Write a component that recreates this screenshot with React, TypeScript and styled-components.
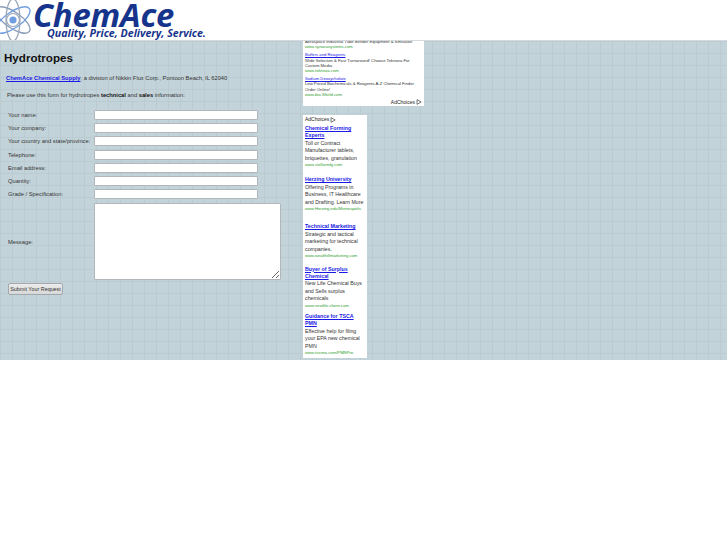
import styled, { createGlobalStyle } from "styled-components";

const fields = [
  "Your name:",
  "Your company:",
  "Your country and state/province:",
  "Telephone:",
  "Email address:",
  "Quantity:",
  "Grade / Specification:",
];

const topAds = [
  {
    title: "Buffers and Reagents",
    lines: ["Wide Selection & Fast Turnaround! Choose Teknova For", "Custom Media"],
    url: "www.teknova.com",
  },
  {
    title: "Sodium Deoxycholate",
    lines: ["Low Priced Biochemicals & Reagents A-Z Chemical Finder.", "Order Online!"],
    url: "www.bio-World.com",
  },
];

const sideAds = [
  {
    title: ["Chemical Forming", "Experts"],
    lines: ["Toll or Contract", "Manufacturer tablets,", "briquettes, granulation"],
    url: "www.stellarmfg.com",
    gap: 9,
  },
  {
    title: ["Herzing University"],
    lines: ["Offering Programs in", "Business, IT Healthcare", "and Drafting. Learn More"],
    url: "www.Herzing.edu/Minneapolis",
    gap: 12,
  },
  {
    title: ["Technical Marketing"],
    lines: ["Strategic and tactical", "marketing for technical", "companies."],
    url: "www.wealthillmarketing.com",
    gap: 7,
  },
  {
    title: ["Buyer of Surplus", "Chemical"],
    lines: ["New Life Chemical Buys", "and Sells surplus", "chemicals"],
    url: "www.newlife-chem.com",
    gap: 5,
  },
  {
    title: ["Guidance for TSCA", "PMN"],
    lines: ["Effective help for filing", "your EPA new chemical", "PMN"],
    url: "www.tsicma.com/PMNPro",
    gap: 0,
  },
];

function AtomLogo() {
  return (
    <svg width="36" height="40" viewBox="0 0 36 40" fill="none">
      <ellipse cx="13" cy="20" rx="20" ry="8" stroke="#8a9bb5" strokeWidth="1.3" transform="rotate(35 13 20)" />
      <ellipse cx="13" cy="20" rx="20" ry="8" stroke="#6f9fe0" strokeWidth="1.3" transform="rotate(-35 13 20)" />
      <ellipse cx="13" cy="20" rx="7" ry="21" stroke="#9aa7b8" strokeWidth="1.3" />
      <circle cx="13" cy="20" r="6.5" stroke="#9aa7b8" strokeWidth="1.2" />
      <circle cx="13" cy="20" r="3.6" fill="#6f9fe0" />
    </svg>
  );
}

function ChoicesMark() {
  return (
    <svg width="6" height="6" viewBox="0 0 6 6" fill="none">
      <path d="M1 .7 5.2 3 1 5.3Z" stroke="#555" strokeWidth=".8" />
    </svg>
  );
}

export default function App() {
  return (
    <>
      <GlobalStyle />
      <Header>
        <AtomLogo />
        <Brand>
          <BrandName>ChemAce</BrandName>
          <Tagline>Quality, Price, Delivery, Service.</Tagline>
        </Brand>
      </Header>

      <Main>
        <Content>
          <Title>Hydrotropes</Title>
          <Intro>
            <a href="#home">ChemAce Chemical Supply</a>, a division of Nikkin Flux Corp., Pontoon Beach, IL 62040
          </Intro>
          <Lead>
            Please use this form for hydrotropes <b>technical</b> and <b>sales</b> information:
          </Lead>
          <Form>
            {fields.map((label) => (
              <FieldRow key={label}>
                <span>{label}</span>
                <TextInput type="text" />
              </FieldRow>
            ))}
            <MessageRow>
              <span>Message:</span>
              <MessageBox />
            </MessageRow>
            <SubmitButton type="button">Submit Your Request</SubmitButton>
          </Form>
        </Content>

        <AdColumn>
          <BannerAd>
            <ClippedLine>Aerospace Industrial Tube Bender Equipment & Simulator</ClippedLine>
            <AdUrl>www.synacosystems.com</AdUrl>
            {topAds.map((ad) => (
              <BannerItem key={ad.title}>
                <BannerTitle href="#ad">{ad.title}</BannerTitle>
                {ad.lines.map((line) => (
                  <BannerLine key={line}>{line}</BannerLine>
                ))}
                <AdUrl>{ad.url}</AdUrl>
              </BannerItem>
            ))}
            <BannerChoices>
              AdChoices <ChoicesMark />
            </BannerChoices>
          </BannerAd>

          <SideAd>
            <SideChoices>
              AdChoices <ChoicesMark />
            </SideChoices>
            {sideAds.map((ad) => (
              <SideItem key={ad.url} $gap={ad.gap}>
                <SideTitle href="#ad">
                  {ad.title.map((line) => (
                    <span key={line}>{line}</span>
                  ))}
                </SideTitle>
                {ad.lines.map((line) => (
                  <SideLine key={line}>{line}</SideLine>
                ))}
                <SideUrl>{ad.url}</SideUrl>
              </SideItem>
            ))}
          </SideAd>
        </AdColumn>
      </Main>
    </>
  );
}

const GlobalStyle = createGlobalStyle`
  html, body {
    margin: 0;
    background: #fff;
    font-family: "Liberation Sans", Arial, sans-serif;
  }
`;

const Header = styled.header`
  height: 41px;
  display: flex;
  background: #fff;
  border-bottom: 1px solid #d4dadd;
  box-sizing: border-box;
`;

const Brand = styled.div`
  margin-left: -3px;
  display: flex;
  flex-direction: column;
  color: #16348c;
  font-family: "Open Sans", sans-serif;
  font-style: italic;
  font-weight: 700;
`;

const BrandName = styled.div`
  margin-top: 1px;
  font-size: 32.8px;
  line-height: 27px;
  height: 27px;
  letter-spacing: -0.2px;
`;

const Tagline = styled.div`
  margin-left: 14px;
  margin-top: -1px;
  font-size: 10.65px;
  line-height: 12px;
  font-weight: 700;
  white-space: nowrap;
`;

const Main = styled.main`
  height: 319px;
  display: flex;
  background-color: #c3d3da;
  background-image:
    linear-gradient(#bccbd2 1px, transparent 1px),
    linear-gradient(90deg, #bccbd2 1px, transparent 1px);
  background-size: 12px 12px;
`;

const Content = styled.section`
  width: 303px;
  flex: none;
  color: #333;
  font-size: 5.75px;
`;

const Title = styled.h1`
  margin: 10px 0 0 4px;
  font-size: 11.6px;
  line-height: 14px;
  color: #111;
`;

const Intro = styled.p`
  margin: 9px 0 0 6px;
  line-height: 8px;
  a {
    color: #1a1ae6;
    font-weight: 700;
  }
`;

const Lead = styled.p`
  margin: 9px 0 0 7px;
  line-height: 8px;
  b {
    color: #111;
  }
`;

const Form = styled.form`
  margin: 9px 0 0 8px;
  display: flex;
  flex-direction: column;
`;

const FieldRow = styled.label`
  height: 13.3px;
  display: grid;
  grid-template-columns: 86px 164px;
  align-items: center;
  white-space: nowrap;
`;

const TextInput = styled.input`
  box-sizing: border-box;
  width: 164px;
  height: 10px;
  padding: 0;
  background: #fff;
  border: 1px solid #b0b6b9;
  border-radius: 1px;
  outline: none;
`;

const MessageRow = styled.label`
  margin-top: 2px;
  display: grid;
  grid-template-columns: 86px 187px;
  align-items: center;
`;

const MessageBox = styled.textarea`
  box-sizing: border-box;
  width: 187px;
  height: 77px;
  padding: 0;
  background: #fff;
  border: 1px solid #b0b6b9;
  border-radius: 1px;
  outline: none;
  resize: both;
`;

const SubmitButton = styled.button`
  align-self: flex-start;
  margin-top: 3px;
  width: 55px;
  height: 12px;
  padding: 0;
  font-family: inherit;
  font-size: 5.4px;
  color: #333;
  background: linear-gradient(#ececec, #d8d8d8);
  border: 1px solid #a2a8ac;
  border-radius: 2px;
`;

const AdColumn = styled.aside`
  width: 121px;
  flex: none;
  display: flex;
  flex-direction: column;
  align-items: flex-start;
  gap: 9px;
`;

const BannerAd = styled.div`
  box-sizing: border-box;
  width: 121px;
  height: 65px;
  padding: 0 2px;
  background: #fff;
  overflow: hidden;
  color: #333;
  font-size: 4.2px;
  line-height: 5.2px;
`;

const ClippedLine = styled.div`
  margin-top: -2px;
  white-space: nowrap;
`;

const AdUrl = styled.div`
  color: #2e9e2e;
`;

const BannerItem = styled.div`
  margin-top: 3px;
`;

const BannerTitle = styled.a`
  display: block;
  color: #1a1ae6;
  text-decoration: underline;
`;

const BannerLine = styled.div`
  white-space: nowrap;
`;

const BannerChoices = styled.div`
  margin-top: 1px;
  display: flex;
  justify-content: flex-end;
  align-items: center;
  gap: 1px;
  font-size: 5px;
  line-height: 8px;
  color: #222;
`;

const SideAd = styled.div`
  box-sizing: border-box;
  width: 64px;
  height: 243px;
  padding: 0 2px;
  background: #fff;
  overflow: hidden;
  color: #333;
`;

const SideChoices = styled.div`
  height: 9px;
  margin-bottom: 1px;
  display: flex;
  align-items: center;
  gap: 1px;
  font-size: 5px;
  line-height: 9px;
  color: #222;
`;

const SideItem = styled.div<{ $gap: number }>`
  margin-bottom: ${({ $gap }) => $gap}px;
`;

const SideTitle = styled.a`
  display: flex;
  flex-direction: column;
  color: #1a1ae6;
  font-size: 5.3px;
  font-weight: 700;
  line-height: 7.4px;
  text-decoration: underline;
`;

const SideLine = styled.div`
  font-size: 5.25px;
  line-height: 7.4px;
  white-space: nowrap;
`;

const SideUrl = styled.div`
  color: #2e9e2e;
  font-size: 4.2px;
  line-height: 5.4px;
  white-space: nowrap;
`;
